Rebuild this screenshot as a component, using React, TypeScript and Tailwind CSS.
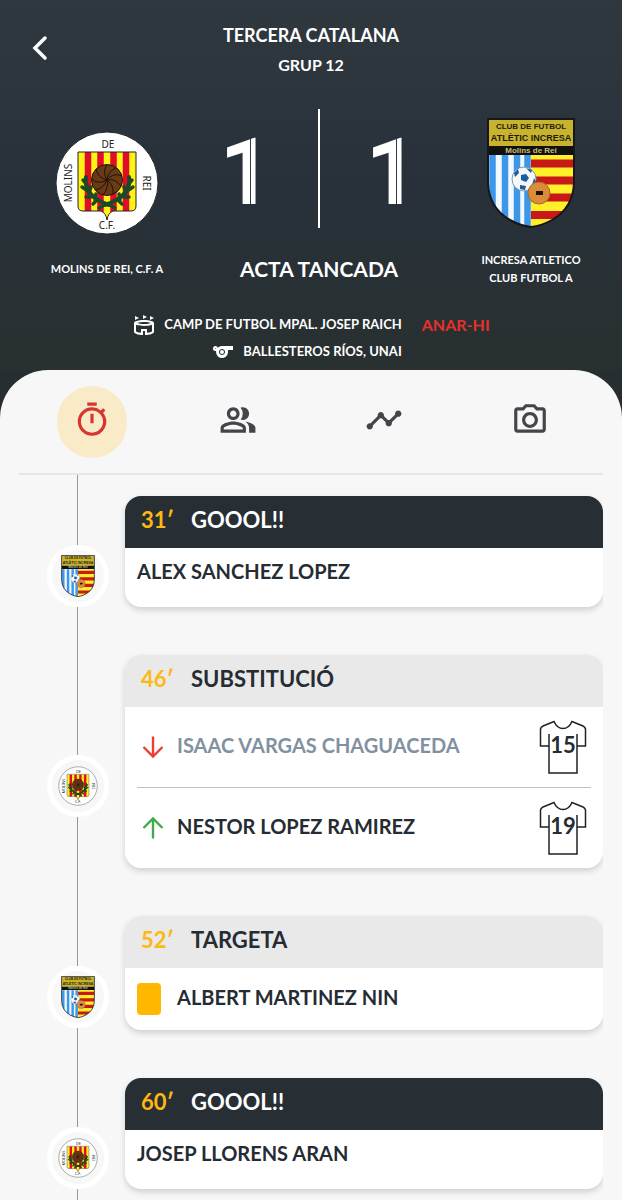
import { useState } from 'react';
import type { ReactNode } from 'react';
import {
  MdOutlinePeopleAlt, MdOutlinePhotoCamera, MdOutlineStadium, MdOutlineTimer, MdSports, MdTimeline,
} from 'react-icons/md';

type Team = 'molins' | 'incresa';

interface MatchEvent {
  minute: number;
  team: Team;
  kind: 'goal' | 'substitution' | 'card';
  player: string;
  shirt?: number;
  playerIn?: string;
  shirtIn?: number;
}

const events: MatchEvent[] = [
  { minute: 31, team: 'incresa', kind: 'goal', player: 'ALEX SANCHEZ LOPEZ' },
  {
    minute: 46, team: 'molins', kind: 'substitution',
    player: 'ISAAC VARGAS CHAGUACEDA', shirt: 15,
    playerIn: 'NESTOR LOPEZ RAMIREZ', shirtIn: 19,
  },
  { minute: 52, team: 'incresa', kind: 'card', player: 'ALBERT MARTINEZ NIN' },
  { minute: 60, team: 'molins', kind: 'goal', player: 'JOSEP LLORENS ARAN' },
];

const titles = { goal: 'GOOOL!!', substitution: 'SUBSTITUCIÓ', card: 'TARGETA' };

const tabs = [
  { id: 'events', label: 'Cronologia', icon: <MdOutlineTimer size={38} /> },
  { id: 'lineups', label: 'Alineacions', icon: <MdOutlinePeopleAlt size={38} /> },
  { id: 'stats', label: 'Estadístiques', icon: <MdTimeline size={38} /> },
  { id: 'photos', label: 'Fotos', icon: <MdOutlinePhotoCamera size={38} /> },
];

export default function App() {
  const [tab, setTab] = useState('events');

  return (
    <div className="flex h-screen flex-col overflow-hidden bg-[#262e31] font-['Lato','Liberation_Sans',sans-serif] text-[#252c33]">
      <MatchHeader />

      <main className="flex min-h-0 flex-1 flex-col rounded-t-[48px] bg-[#f7f7f7] px-[19px]">
        <nav className="grid h-[105px] shrink-0 grid-cols-4 items-center justify-items-center border-b-2 border-[#e6e6e6]">
          {tabs.map(t => (
            <button
              key={t.id}
              aria-label={t.label}
              onClick={() => setTab(t.id)}
              className={`flex h-[72px] w-[70px] items-center justify-center rounded-full pb-1 ${tab === t.id ? 'bg-[#f9eac8] text-[#d8352f]' : 'text-[#45444b]'}`}
            >
              {t.icon}
            </button>
          ))}
        </nav>

        <div className="min-h-0 flex-1 overflow-y-auto [scrollbar-width:none]">
          <div className="flex h-[21px] w-[117px] justify-center">
            <div className="w-px bg-[#969696]" />
          </div>
          <ul>
            {events.map(e => <EventRow key={e.minute} event={e} />)}
          </ul>
        </div>
      </main>
    </div>
  );
}

function MatchHeader() {
  return (
    <header className="shrink-0 bg-linear-to-b from-[#30383f] via-[#28313a] to-[#283030] pb-[5px] text-white">
      <div className="grid h-[109px] grid-cols-[80px_1fr_80px] pt-5">
        <button aria-label="Enrere" className="flex h-14 items-center justify-center">
          <svg width="20" height="28" viewBox="0 0 20 28" fill="none" stroke="currentColor" strokeWidth="3.5" strokeLinecap="round">
            <path d="M15 4 L5 14 L15 24" />
          </svg>
        </button>
        <div className="text-center font-bold">
          <h1 className="text-[18px] leading-[30px]">TERCERA CATALANA</h1>
          <p className="text-[16px] leading-[30px]">GRUP 12</p>
        </div>
      </div>

      <div className="flex pr-4 pl-8">
        <div className="flex w-[150px] flex-col items-center pt-[9px]">
          <div className="flex h-[118px] items-end"><MolinsCrest size={106} /></div>
          <p className="mt-[15px] flex h-9 items-center text-[11px] leading-[18px] font-bold">MOLINS DE REI, C.F. A</p>
        </div>

        <div className="flex flex-1 flex-col items-center">
          <div className="grid h-[119px] w-full grid-cols-[1fr_2px_1fr] grid-rows-1 justify-items-center gap-x-2">
            <Score value={1} />
            <div className="w-full bg-white" />
            <Score value={1} />
          </div>
          <p className="mt-[25px] text-[21px] leading-8 font-bold">ACTA TANCADA</p>
        </div>

        <div className="flex w-[150px] flex-col items-center pt-[9px]">
          <div className="flex h-[118px] items-start"><IncresaCrest size={110} /></div>
          <p className="mt-[15px] h-9 text-center text-[11px] leading-[18px] font-bold">
            INCRESA ATLETICO<br />CLUB FUTBOL A
          </p>
        </div>
      </div>

      <div className="mt-6 flex justify-center gap-5 font-bold">
        <div className="flex flex-col items-end text-[13px] leading-[27px]">
          <p className="flex items-center gap-2"><MdOutlineStadium size={24} />CAMP DE FUTBOL MPAL. JOSEP RAICH</p>
          <p className="flex items-center gap-2"><MdSports size={24} />BALLESTEROS RÍOS, UNAI</p>
        </div>
        <a href="#mapa" className="text-[16px] leading-[27px] text-[#e5302c]">ANAR-HI</a>
      </div>
    </header>
  );
}

// inline numeral: the gradient leaves a thin gap down the stem
function Score({ value }: { value: number }) {
  return (
    <span className="h-[128px] bg-[linear-gradient(90deg,#fff_30px,#323a41_30px,#323a41_31px,#fff_31px)] bg-clip-text font-['Roboto','Liberation_Sans',sans-serif] text-[92px] leading-[128px] font-bold text-transparent">
      {value}
    </span>
  );
}

function EventRow({ event }: { event: MatchEvent }) {
  const isGoal = event.kind === 'goal';

  return (
    <li className="flex">
      <div className="flex w-[117px] shrink-0 flex-col items-center">
        <div className="w-px flex-1 bg-[#969696]" />
        <div className="flex size-[62px] items-center justify-center rounded-full border-5 border-white bg-[#f7f7f7]">
          {event.team === 'molins' ? <MolinsCrest size={40} /> : <IncresaCrest size={42} />}
        </div>
        <div className="w-px flex-1 bg-[#969696]" />
      </div>

      <div className="min-w-0 flex-1 -ml-[11px] pb-12">
        <article className="overflow-hidden rounded-2xl bg-white shadow-[0_3px_6px_rgba(0,0,0,0.16)]">
          <h2 className={`flex h-13 items-center px-4 pb-1 text-[22px] leading-8 font-bold ${isGoal ? 'bg-[#272e34] text-white' : 'bg-[#e9e9e9]'}`}>
            <span className="w-[50px] text-[#fdb813]">{event.minute}′</span>
            {titles[event.kind]}
          </h2>

          {isGoal && <p className="px-3 pb-3 text-[20px] leading-[47px] font-bold">{event.player}</p>}

          {event.kind === 'card' && (
            <div className="flex h-[62px] items-center gap-4 px-3">
              <span className="h-8 w-6 rounded-[4px] bg-[#ffb700]" />
              <span className="pb-1 text-[20px] font-bold">{event.player}</span>
            </div>
          )}

          {event.kind === 'substitution' && (
            <div className="px-3">
              <PlayerLine shirt={event.shirt} arrow={<Arrow className="text-[#ee3b33]" />}>
                <span className="text-[#8291a1]">{event.player}</span>
              </PlayerLine>
              <div className="h-px bg-[#c4bfc4]" />
              <PlayerLine shirt={event.shirtIn} arrow={<Arrow className="rotate-180 text-[#43a94a]" />}>
                {event.playerIn}
              </PlayerLine>
            </div>
          )}
        </article>
      </div>
    </li>
  );
}

function PlayerLine({ arrow, shirt, children }: { arrow: ReactNode; shirt?: number; children: ReactNode }) {
  return (
    <div className="flex h-20 items-center gap-3 pr-1 pl-1">
      {arrow}
      <span className="flex-1 pb-1 text-[20px] font-bold">{children}</span>
      <svg width="48" height="54" viewBox="0 0 48 54">
        <path
          d="M10 14 V53 H38 V14 M10 26 H1.500 V9 Q2 7 4 6 L15 1.500 Q18 8.500 24 8.500 Q30 8.500 33 1.500 L44 6 Q46 7 46.500 9 V26 H38"
          fill="none" stroke="#1d2226" strokeWidth="1.500"
        />
        <text x="24" y="33" textAnchor="middle" fontSize="22" fontWeight="700" fill="#252c33">{shirt}</text>
      </svg>
    </div>
  );
}

function Arrow({ className }: { className: string }) {
  return (
    <svg className={className} width="24" height="24" viewBox="0 0 24 24" fill="none" stroke="currentColor" strokeWidth="2.400">
      <path d="M12 1.500 V21 M2.500 12 L12 21.500 L21.500 12" />
    </svg>
  );
}

function MolinsCrest({ size }: { size: number }) {
  return (
    <svg className="shrink-0" width={size} height={size} viewBox="0 0 106 106">
      <defs>
        <clipPath id="molins-shield">
          <path d="M24 22 H82 V76 Q82 81 77 81 H59 Q54 83 53 90 Q52 83 47 81 H29 Q24 81 24 76 Z" />
        </clipPath>
      </defs>
      <circle cx="53" cy="53" r="51" fill="#fff" stroke="#23282c" strokeWidth="1" />
      <g clipPath="url(#molins-shield)">
        <rect x="24" y="22" width="58" height="70" fill="#fff215" />
        <path d="M34 22 V92 M46.500 22 V92 M59.500 22 V92 M72 22 V92" stroke="#e30b2a" strokeWidth="6.500" />
      </g>
      <path d="M24 22 H82 V76 Q82 81 77 81 H59 Q54 83 53 90 Q52 83 47 81 H29 Q24 81 24 76 Z" fill="none" stroke="#222" strokeWidth="1" />
      {/* laurel */}
      <g fill="none" stroke="#1c4a25" strokeLinecap="round">
        <path d="M32 47 Q29 66 55 75 M75 47 Q78 66 51 75" strokeWidth="4" />
        <path d="M29 50 L33 55 M28 57 L34 61 M32 67 L37 67 M39 74 L43 70 M37 57 L35 63 M42 64 L41 70 M78 50 L74 55 M79 57 L73 61 M75 67 L70 67 M68 74 L64 70 M70 57 L72 63 M65 64 L66 70 M54 74 L61 78 M52 74 L45 78" strokeWidth="3.500" />
      </g>
      <circle cx="53" cy="50" r="15.500" fill="#693a16" stroke="#201208" strokeWidth="1" />
      <path d="M53 50 Q48 42 53 34.500 M53 50 Q54 41 62 38 M53 50 Q59 42 68 46 M53 50 Q61 48 67 56 M53 50 Q60 55 59 64 M53 50 Q55 58 49 65 M53 50 Q49 59 41 60 M53 50 Q44 55 38 49 M53 50 Q44 48 42 39" fill="none" stroke="#201208" strokeWidth="1" />
      <g fill="#222" fontSize="10" textAnchor="middle" fontFamily="Noto Sans, sans-serif">
        <text x="54" y="18">DE</text>
        <text x="53" y="99">C.F.</text>
        <text transform="translate(18 53) rotate(-90)">MOLINS</text>
        <text transform="translate(89 53) rotate(90)">REI</text>
      </g>
    </svg>
  );
}

function IncresaCrest({ size }: { size: number }) {
  const shield = 'M12 1 H98 V65 Q97 90 76 102 Q65 108 55 109 Q45 108 34 102 Q13 90 12 65 Z';
  return (
    <svg className="shrink-0" width={size} height={size} viewBox="0 0 110 110">
      <defs>
        <clipPath id="incresa-shield"><path d={shield} /></clipPath>
      </defs>
      <g clipPath="url(#incresa-shield)">
        <rect x="12" y="0" width="86" height="28" fill="#c9b32c" />
        <rect x="12" y="28" width="86" height="9" fill="#111" />
        <rect x="12" y="37" width="43" height="73" fill="#f1f9ff" />
        <path d="M16.500 37 V110 M29 37 V110 M41 37 V110 M51.500 37 V110" stroke="#3d97e8" strokeWidth="6.500" />
        <rect x="55" y="37" width="43" height="73" fill="#fff02a" />
        <path d="M55 45.500 H98 M55 62.500 H98 M55 79.500 H98 M55 97 H98" stroke="#c91818" strokeWidth="8" />
      </g>
      <circle cx="48" cy="61" r="12" fill="#f4f8fb" stroke="#7e96a8" strokeWidth="1" />
      <path d="M45 57 L50 56 L53 60 L50 64 L45 62 Z M38 55 L42 51 L43 55 L39 59 Z M50 50 L56 52 L55 55 Z M58 60 L60 64 L56 67 Z M44 67 L50 68 L49 72 L44 71 Z" fill="#1c5d9c" />
      <circle cx="63" cy="75" r="11" fill="#d98c3a" stroke="#ad6522" strokeWidth="1" />
      <rect x="60" y="73" width="7" height="4" fill="#1d1108" />
      <path d={shield} fill="none" stroke="#16171a" strokeWidth="2" />
      <g fill="#1d1b10" textAnchor="middle" fontWeight="700" fontFamily="Liberation Sans, sans-serif">
        <text x="55" y="11" fontSize="8">CLUB DE FUTBOL</text>
        <text x="55" y="23" fontSize="9">ATLÈTIC INCRESA</text>
        <text x="55" y="35" fontSize="8" fill="#c9bd7a">Molins de Rei</text>
      </g>
    </svg>
  );
}
